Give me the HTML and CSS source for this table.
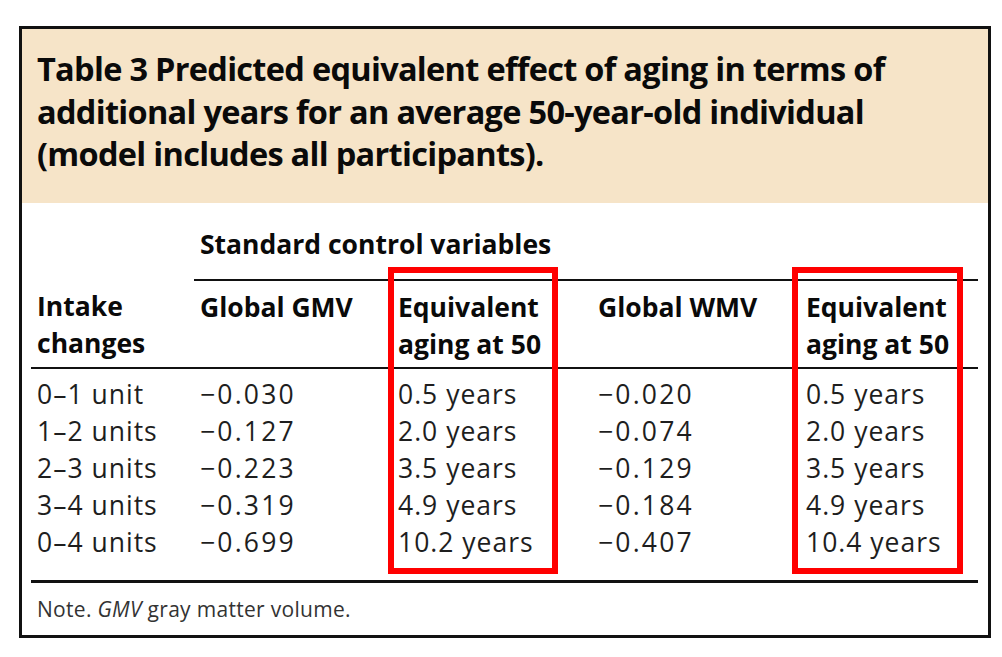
FILE: index.html
```html
<!DOCTYPE html>
<html lang="en">
<head>
<meta charset="utf-8">
<title>Table 3</title>
<link rel="stylesheet" href="styles.css">
</head>
<body>
<div class="table-box">
  <div class="caption">
    <h1 class="caption-title">Table 3 Predicted equivalent effect of aging in terms of<br>additional years for an average 50-year-old individual<br>(model includes all participants).</h1>
  </div>
  <table class="data-table">
    <colgroup>
      <col class="c1"><col class="c2"><col class="c3"><col class="c4"><col class="c5">
    </colgroup>
    <thead>
      <tr class="group-row">
        <th></th>
        <th colspan="4" class="group-head">Standard control variables</th>
      </tr>
      <tr class="head-row">
        <th>Intake<br>changes</th>
        <th>Global GMV</th>
        <th>Equivalent<br>aging at 50</th>
        <th>Global WMV</th>
        <th>Equivalent<br>aging at 50</th>
      </tr>
    </thead>
    <tbody>
      <tr class="first"><td>0–1 unit</td><td class="num">−0.030</td><td>0.5 years</td><td class="num">−0.020</td><td>0.5 years</td></tr>
      <tr><td>1–2 units</td><td class="num">−0.127</td><td>2.0 years</td><td class="num">−0.074</td><td>2.0 years</td></tr>
      <tr><td>2–3 units</td><td class="num">−0.223</td><td>3.5 years</td><td class="num">−0.129</td><td>3.5 years</td></tr>
      <tr><td>3–4 units</td><td class="num">−0.319</td><td>4.9 years</td><td class="num">−0.184</td><td>4.9 years</td></tr>
      <tr class="last"><td>0–4 units</td><td class="num">−0.699</td><td>10.2 years</td><td class="num">−0.407</td><td>10.4 years</td></tr>
    </tbody>
  </table>
  <p class="note">Note. <em>GMV</em> gray matter volume.</p>
  <div class="highlight highlight-left"></div>
  <div class="highlight highlight-right"></div>
</div>
</body>
</html>
```

FILE: styles.css
```css
html, body {
  margin: 0;
  padding: 0;
  background: #ffffff;
}

body {
  font-family: "Open Sans", "Noto Sans", "DejaVu Sans", sans-serif;
  color: #111;
}

.table-box {
  position: relative;
  box-sizing: border-box;
  width: 972px;
  margin: 26px 0 0 19px;
  border: 3px solid #111;
  background: #fff;
}

.caption {
  background: #f6e4c8;
  height: 174px;
  box-sizing: border-box;
  padding: 19px 0 0 15px;
}

.caption-title {
  margin: 0;
  font-size: 32.5px;
  line-height: 42.5px;
  font-weight: 700;
  letter-spacing: -0.7px;
  color: #0a0a0a;
}

.data-table {
  width: 947px;
  margin-left: 9px;
  border-collapse: collapse;
  table-layout: fixed;
  font-size: 26.5px;
  line-height: 37px;
}

.c1 { width: 163px; }
.c2 { width: 198px; }
.c3 { width: 200px; }
.c4 { width: 208px; }
.c5 { width: 178px; }

.data-table th,
.data-table td {
  padding: 0 0 0 6px;
  text-align: left;
  vertical-align: top;
  white-space: nowrap;
}

.data-table th {
  font-weight: 700;
  color: #0a0a0a;
}

.group-row th {
  padding-top: 23px;
  padding-bottom: 16px;
}

.group-head {
  border-bottom: 2px solid #111;
}

.head-row th {
  padding-top: 8px;
  padding-bottom: 4px;
  border-bottom: 2px solid #111;
}

.data-table td {
  color: #1e1e1e;
  font-weight: 400;
  letter-spacing: 1px;
}

.data-table td.num {
  letter-spacing: 2.2px;
}

.data-table tr.first td {
  padding-top: 7px;
}

.data-table tr.last td {
  padding-bottom: 19px;
  border-bottom: 3px solid #111;
}

.note {
  margin: 0;
  padding: 12px 0 12px 15px;
  font-size: 21px;
  line-height: 28px;
  letter-spacing: 0.3px;
  color: #333;
}

.note em {
  font-style: italic;
}

.highlight {
  position: absolute;
  top: 238px;
  height: 307px;
  box-sizing: border-box;
  border: 6px solid #ff0000;
}

.highlight-left {
  left: 366px;
  width: 170px;
}

.highlight-right {
  left: 770px;
  width: 171px;
}
```
